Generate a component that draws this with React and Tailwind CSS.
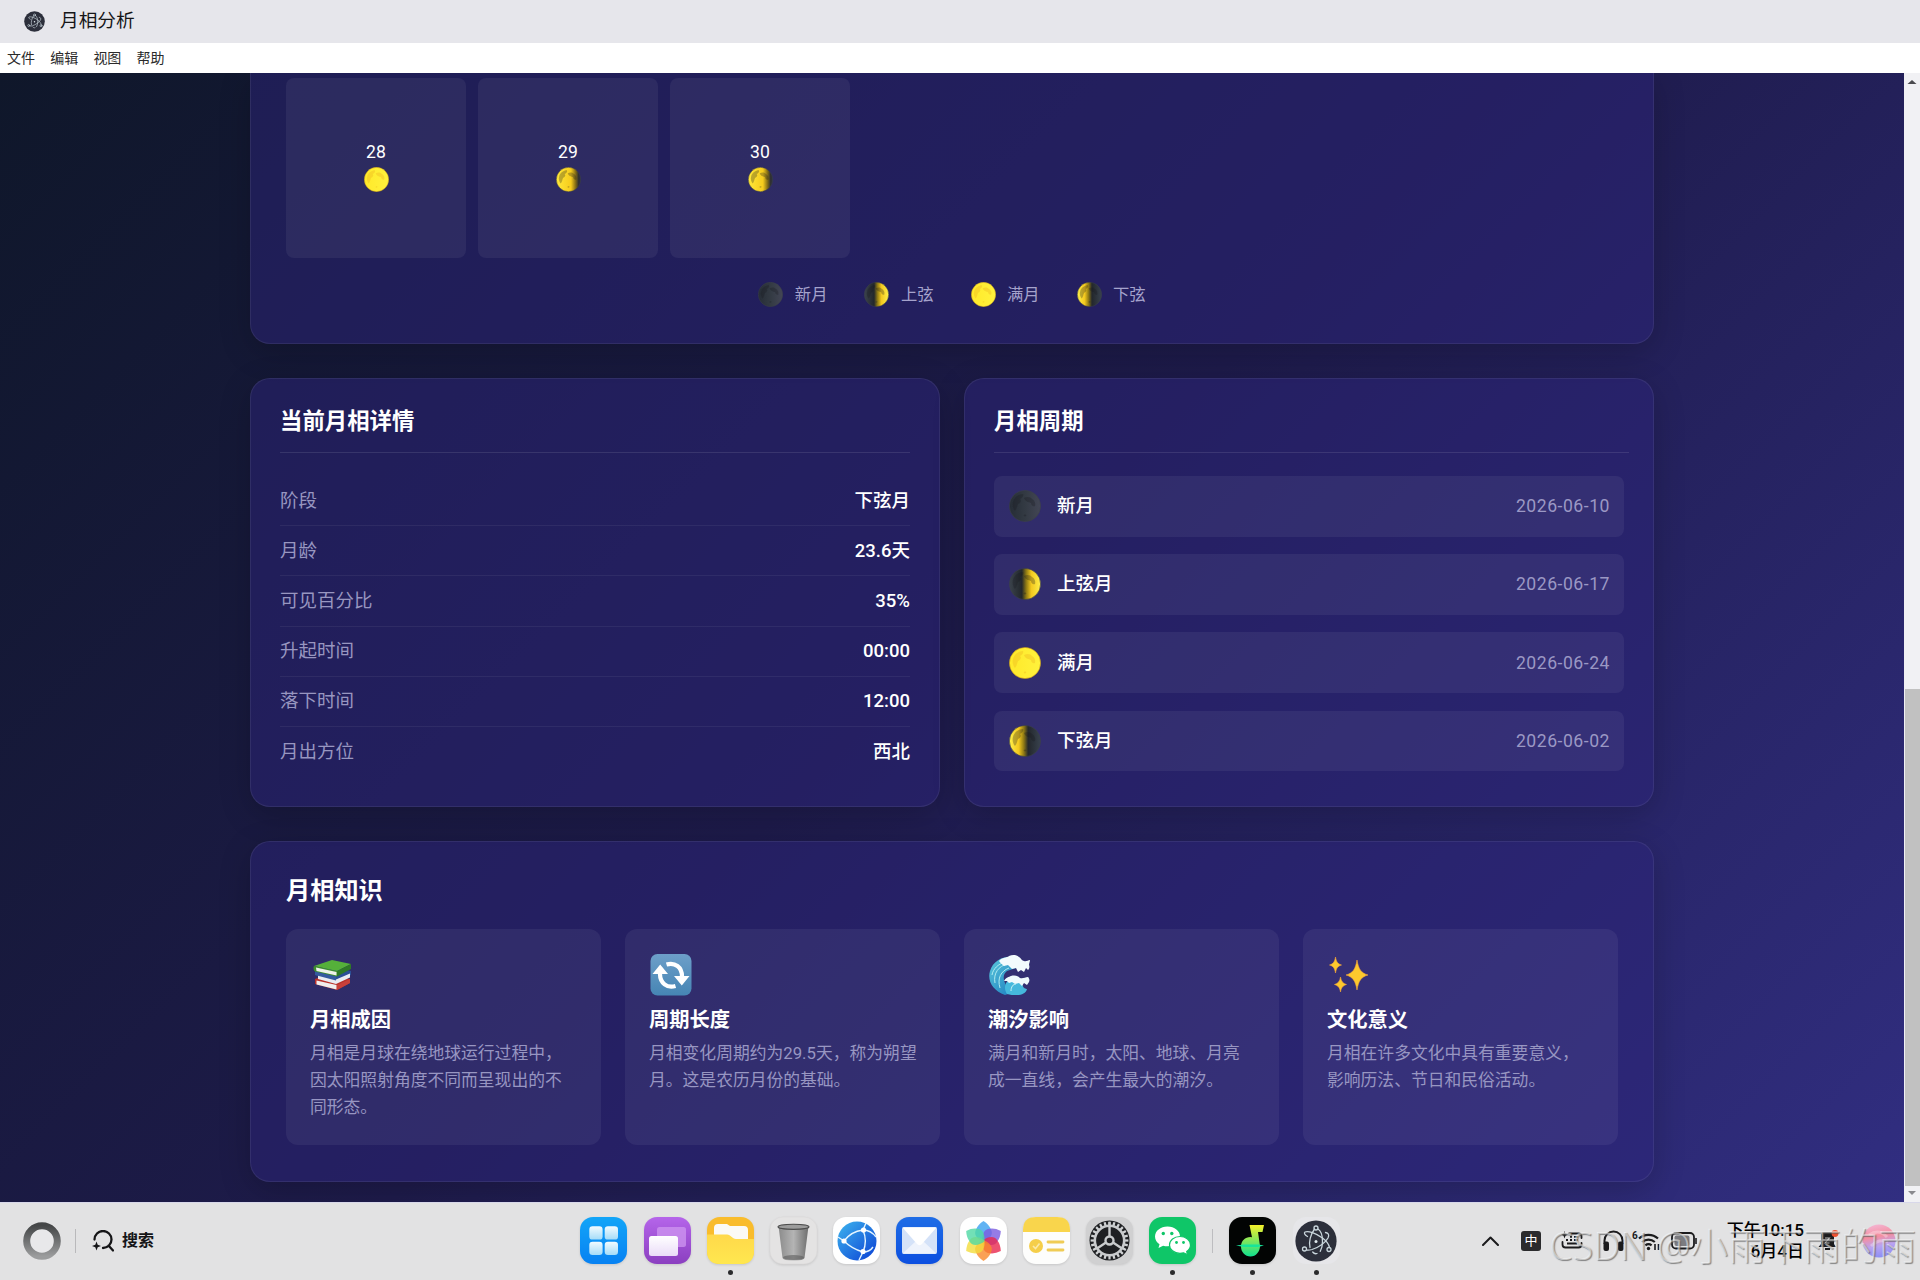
import React from "react";

const PHASES = {
  new: [["0", "#262d36"], ["0.5", "#333a43"], ["1", "#434655"]],
  first: [["0", "#3b434c"], ["0.4", "#22272b"], ["0.54", "#8f7a14"], ["0.7", "#f3c81e"], ["1", "#fff04a"]],
  full: [["0", "#ffe92a"], ["1", "#fff23c"]],
  gibbous: [["0", "#ffe83a"], ["0.6", "#f6cc1c"], ["0.8", "#7d6816"], ["0.92", "#2b2d33"], ["1", "#33373f"]],
  last: [["0", "#fff04a"], ["0.3", "#f3c81e"], ["0.46", "#8f7a14"], ["0.6", "#23272c"], ["1", "#38424e"]],
};

function Moon({ phase, className }) {
  const id = "moon-" + phase;
  const lit = phase === "full";
  const spot = lit ? "#e9a91d" : "#14171c";
  const opacity = lit ? 0.3 : 0.28;
  return (
    <svg viewBox="0 0 32 32" className={className}>
      <defs>
        <linearGradient id={id} x1="0" x2="1" y1="0" y2="0">
          {PHASES[phase].map(([o, c]) => (
            <stop key={o} offset={o} stopColor={c} />
          ))}
        </linearGradient>
        <filter id={id + "-soft"} x="-20%" y="-20%" width="140%" height="140%">
          <feGaussianBlur stdDeviation="0.7" />
        </filter>
      </defs>
      <circle cx="16" cy="16" r="15.6" fill={"url(#" + id + ")"} stroke={lit ? "#c99a18" : "#3b4048"} strokeWidth="0.6" />
      <g fill={spot} opacity={opacity} filter={"url(#" + id + "-soft)"}>
        <path d="M4 12c1-5 6-8 10-8 1 2-1 4-3 5 2 2 0 4-2 5-1 2-1 5-3 7-2-2-3-6-2-9z" />
        <path d="M15 8c3-2 7-1 8 1 2 1 4 4 3 7-2 1-4-1-4-3-2-1-6-1-7-5z" />
        <path d="M15 25c1-1 3 0 2 1s-3 0-2-1z" />
      </g>
    </svg>
  );
}

function ElectronMark({ className }) {
  return (
    <svg viewBox="0 0 42 42" className={className}>
      <circle cx="21" cy="21" r="20.6" fill="#2c2f3b" />
      <g fill="none" stroke="#c9d6dc" strokeWidth="1.3" strokeLinecap="round">
        <path d="M12.500 16.500C9.500 15 8.800 13 10 12c3-1.500 11 1 17.500 6 4 3 6.500 6.500 7 9.500" />
        <path d="M22 33.500c-1.500.5-3 .2-4.300-1.500M15 27.500c-1.500-5 .5-13 4.500-18.500" />
        <path d="M30.500 12.500c3 .5 4 2.500 2.500 5.500-3 5-10 9.500-16 11.500-2 .6-3.500.8-5 .6" />
        <path d="M23 9c2.500 1.500 4.500 6.500 4.500 12.500 0 4-.9 7.500-2.300 9.800" />
        <circle cx="21" cy="8" r="2" />
        <circle cx="9.500" cy="29" r="2" />
        <circle cx="34" cy="29.500" r="2" />
      </g>
      <circle cx="21" cy="21.500" r="1.500" fill="#dfe9ee" />
    </svg>
  );
}

const DAYS = [
  { day: 28, phase: "full" },
  { day: 29, phase: "gibbous" },
  { day: 30, phase: "gibbous" },
];

const LEGEND = [
  ["新月", "new"],
  ["上弦", "first"],
  ["满月", "full"],
  ["下弦", "last"],
];

const DETAILS = [
  ["阶段", "下弦月"],
  ["月龄", "23.6天"],
  ["可见百分比", "35%"],
  ["升起时间", "00:00"],
  ["落下时间", "12:00"],
  ["月出方位", "西北"],
];

const CYCLE = [
  ["新月", "2026-06-10", "new"],
  ["上弦月", "2026-06-17", "first"],
  ["满月", "2026-06-24", "full"],
  ["下弦月", "2026-06-02", "last"],
];

function Books() {
  return (
    <svg viewBox="0 0 44 44" className="size-11">
      <path d="M5 31l22 6 13-7v-4l-22-5-13 5z" fill="#b8312b" />
      <path d="M6.500 31.500l20 5V32l-20-4.500z" fill="#f0eeee" />
      <path d="M27 37l13-7v-4l-13 6z" fill="#c9403a" />
      <path d="M5 22l22 6 14-6v-4l-22-5-14 5z" fill="#2b4f96" />
      <path d="M8 21.500l18 5 14-6v4l-14 6.500-18-5z" fill="#e8ebf2" />
      <path d="M5 18l21 5v4.500L5 22z" fill="#34599f" />
      <path d="M4 13l18-6 19 4-14 7z" fill="#55b03a" />
      <path d="M4 13l23 5v5.500L5 18.500c-1.500-1-2-4-1-5.500z" fill="#3f8f2c" />
      <path d="M6 14.500l20.500 4.500v3.500L6.500 18z" fill="#eef1ea" />
      <path d="M27 18l14-7v5l-14 7.500z" fill="#2f7a25" />
    </svg>
  );
}

function Cycle() {
  return (
    <svg viewBox="0 0 44 44" className="size-11">
      <defs>
        <linearGradient id="cyc" x1="0" x2="0" y1="0" y2="1">
          <stop offset="0" stopColor="#6d9fc9" />
          <stop offset="1" stopColor="#4685b4" />
        </linearGradient>
      </defs>
      <rect x="1.500" y="1" width="41" height="41.500" rx="7" fill="url(#cyc)" />
      <g fill="none" stroke="#fff" strokeWidth="4.200">
        <path d="M17.500 11.500C26 9 33 14 33 23.500" />
        <path d="M26.500 33C18 35.500 11 30 11 21" />
      </g>
      <path d="M25 23h15.500l-7.700 9.500z M19 21H3.500l7.700-9.500z" fill="#fff" />
    </svg>
  );
}

function Wave() {
  return (
    <svg viewBox="0 0 44 44" className="size-11">
      <defs>
        <linearGradient id="wav" x1="0" x2="1" y1="0" y2="1">
          <stop offset="0" stopColor="#5cc9dc" />
          <stop offset="1" stopColor="#1576bd" />
        </linearGradient>
      </defs>
      <path d="M17 42C5 38-1 28 2 18 5 8 15 3 24 4l8 5-4 6-9 3c-4 3-4 8-2 12l3 11z" fill="url(#wav)" />
      <path d="M7 30c-2-10 4-17 12-19M12 35c-3-10 1-17 9-20M4 22c1-6 6-11 13-13" fill="none" stroke="#b0ecf0" strokeWidth="1" />
      <path d="M11 8c3-4 8-3 10-5 4-2 8-1 10 1 2 1 3 4 5 4 2 1 4-1 6-1 0 2-1 3-1 5 1 2 0 4-1 5l-2-2-2 4-3-2-3 2-2-4-4 1-4-4-4 1c-2-2-4-3-5-5z" fill="#f3fbfd" />
      <path d="M19 41c-4-6-2-14 5-15l8 1 3 6c0 2 3 3 4 3-1 4-5 6-10 6-4 0-7 0-10-1z" fill="#45b8dc" />
      <path d="M16 28c2-4 5-4 7-5 4-1 7 0 9 2 3 1 5-1 8-1 1 1 2 3 1 5l-2 3-3-2-2 3-3-3-4 1-3-2-3 1-2-2z" fill="#effafd" />
      <path d="M23 38c0-4 2-7 5-7" fill="none" stroke="#c4f1f5" strokeWidth="1" />
    </svg>
  );
}

function Sparkles() {
  return (
    <svg viewBox="0 0 44 44" className="size-11">
      <g fill="#fdc92d" stroke="#f5a53a" strokeWidth="0.6">
        <path d="M30 7c1.500 9 4 13 11 15-7 2-9.500 6-11 15-1.500-9-4-13-11-15 7-2 9.500-6 11-15z" />
        <path d="M8.500 4c.8 5 2.500 7 6 8-3.500 1-5.200 3-6 8-.8-5-2.500-7-6-8 3.500-1 5.200-3 6-8z" />
        <path d="M13.500 24c.7 4.500 2.500 6.500 6 7.500-3.500 1-5.300 3-6 7.500-.7-4.500-2.500-6.500-6-7.500 3.500-1 5.300-3 6-7.500z" />
      </g>
    </svg>
  );
}

const FACTS = [
  [Books, "月相成因", ["月相是月球在绕地球运行过程中，", "因太阳照射角度不同而呈现出的不", "同形态。"]],
  [Cycle, "周期长度", ["月相变化周期约为29.5天，称为朔望", "月。这是农历月份的基础。"]],
  [Wave, "潮汐影响", ["满月和新月时，太阳、地球、月亮", "成一直线，会产生最大的潮汐。"]],
  [Sparkles, "文化意义", ["月相在许多文化中具有重要意义，", "影响历法、节日和民俗活动。"]],
];

function AppIcon({ children, dot }) {
  return (
    <div className="relative size-[47px]">
      <svg viewBox="0 0 47 47" className="size-[47px] overflow-visible drop-shadow-[0_1px_1px_rgba(0,0,0,0.12)]">
        {children}
      </svg>
      {dot && <span className="absolute left-[21px] top-[53px] size-[5px] rounded-full bg-[#2a2a2c]" />}
    </div>
  );
}

function Grad({ id, from, to }) {
  return (
    <defs>
      <linearGradient id={id} x1="0" x2="0" y1="0" y2="1">
        <stop offset="0" stopColor={from} />
        <stop offset="1" stopColor={to} />
      </linearGradient>
    </defs>
  );
}

function Dock() {
  const teeth = Array.from({ length: 24 }, (_, i) => i * 15);
  const petals = [
    ["#3aa0f0", 0],
    ["#7a5be0", 60],
    ["#e8274e", 120],
    ["#f98a2c", 180],
    ["#f3dc3c", 240],
    ["#4fd8a4", 300],
  ];
  return (
    <div className="flex items-center gap-[16.2px]">
      <AppIcon>
        <Grad id="d1" from="#12a5f8" to="#0781f2" />
        <Grad id="d1b" from="#f2fbff" to="#a5dcf8" />
        <rect width="47" height="47" rx="13" fill="url(#d1)" />
        {[[9.3, 9.3], [24.7, 9.3], [9.3, 24.7], [24.7, 24.7]].map(([x, y]) => (
          <rect key={x + "-" + y} x={x} y={y} width="13.3" height="13.3" rx="3.2" fill="url(#d1b)" />
        ))}
      </AppIcon>
      <AppIcon>
        <Grad id="d2" from="#b565ea" to="#8b3fc0" />
        <Grad id="d2b" from="#ffffff" to="#eadcf8" />
        <rect width="47" height="47" rx="13" fill="url(#d2)" />
        <rect x="13" y="10" width="29" height="20" rx="2.5" fill="#cf97f0" opacity=".75" />
        <rect x="5" y="19" width="29" height="20" rx="2.5" fill="url(#d2b)" />
      </AppIcon>
      <AppIcon dot>
        <Grad id="d3" from="#ffd94a" to="#ffe74f" />
        <rect width="47" height="47" rx="13" fill="#f9bc2c" />
        <path d="M7 11q0-4 4-4h9l3 2h14q4 0 4 4v14H7z" fill="#fbfaf5" />
        <path d="M0 17.500h20c4 0 5 4.500 9 4.500h18v12q0 13-13 13H13Q0 47 0 34z" fill="url(#d3)" />
      </AppIcon>
      <AppIcon>
        <defs>
          <linearGradient id="d4" x1="0" x2="1" y1="0" y2="0">
            <stop offset="0" stopColor="#8b8b8b" />
            <stop offset=".5" stopColor="#b4b4b4" />
            <stop offset="1" stopColor="#6e6e6e" />
          </linearGradient>
        </defs>
        <rect width="47" height="47" rx="13" fill="#e4e3e3" stroke="#d8d7d7" strokeWidth=".5" />
        <path d="M8.500 9h30l-4 32q-.5 2.500-11 2.500t-11-2.500z" fill="url(#d4)" />
        <ellipse cx="23.500" cy="9.800" rx="15.500" ry="2.600" fill="#9c9c9c" stroke="#4d4d4d" strokeWidth="1.100" />
        <ellipse cx="23.500" cy="40.500" rx="10.500" ry="2.600" fill="#5d5d5d" opacity=".6" />
      </AppIcon>
      <AppIcon>
        <defs>
          <linearGradient id="d5" x1="0" x2="1" y1="0" y2="1">
            <stop offset="0" stopColor="#3db5ee" />
            <stop offset="1" stopColor="#0a3fd4" />
          </linearGradient>
        </defs>
        <rect width="47" height="47" rx="13" fill="#fff" />
        <circle cx="24" cy="24" r="19.500" fill="url(#d5)" />
        <g fill="none" stroke="#e4f5ff" strokeWidth="1.400">
          <path d="M11 24C16 17 22 14 30 13M11 24c6 6 12 9 19 11M30 13c3 7 3 15 0 22M30 13l3-7M30 13c6 0 10 3 13 7M30 35c5 0 8-2 10-5M30 35l-4 8M11 24l-6-4" />
        </g>
        <g fill="#fff">
          <circle cx="11" cy="24" r="2.600" />
          <circle cx="30.500" cy="13" r="2.600" />
          <circle cx="30" cy="34.500" r="2.600" />
        </g>
      </AppIcon>
      <AppIcon>
        <Grad id="d6" from="#1f6de6" to="#0c4fe0" />
        <rect width="47" height="47" rx="13" fill="url(#d6)" />
        <rect x="6" y="10" width="35" height="27" rx="2" fill="#d4e2f8" />
        <path d="M6.500 36.500L20 24h7l13.500 12.500z" fill="#eef3fc" />
        <path d="M6.500 10.500h34L26 27q-2.500 2.500-5 0z" fill="#fff" />
      </AppIcon>
      <AppIcon>
        <rect width="47" height="47" rx="13" fill="#fff" />
        {petals.map(([c, a]) => (
          <path key={a} d="M23.500 25c-7-3-10-8-7.500-12.500q2-5 7.500-8.500 5.500 3.500 7.500 8.500c2.500 4.500-.5 9.500-7.500 12.500z" fill={c} opacity=".8" transform={"rotate(" + a + " 23.500 24)"} />
        ))}
      </AppIcon>
      <AppIcon>
        <rect width="47" height="47" rx="13" fill="#fdfdfc" />
        <path d="M0 15v-2Q0 0 13 0h21q13 0 13 13v2z" fill="#f9d54c" />
        <circle cx="13" cy="29" r="7" fill="#f5ce4a" />
        <path d="M10 29l2.500 2.500 4-5" fill="none" stroke="#fbe9a8" strokeWidth="1.600" />
        <path d="M25 25h15M25 33h15" stroke="#f0cc55" strokeWidth="2.800" strokeLinecap="round" />
      </AppIcon>
      <AppIcon>
        <rect width="47" height="47" rx="13" fill="#d0d0d1" />
        <circle cx="23.500" cy="23.500" r="20" fill="#1f2023" />
        <g fill="#d0d2d4">
          {teeth.map((a) => (
            <rect key={a} x="22.400" y="4.600" width="2.200" height="4" transform={"rotate(" + a + " 23.500 23.500)"} />
          ))}
        </g>
        <circle cx="23.500" cy="23.500" r="14.700" fill="none" stroke="#c9cbcd" strokeWidth="2.600" />
        <circle cx="23.500" cy="23.500" r="4" fill="none" stroke="#c9cbcd" strokeWidth="2.400" />
        <path d="M23.500 19.500V5M20 25.500L11 31.500M27 25.500L36 31.500" stroke="#c9cbcd" strokeWidth="2.400" />
      </AppIcon>
      <AppIcon dot>
        <rect width="47" height="47" rx="13" fill="#0fc668" />
        <path d="M18.500 9.500C11.500 9.500 6 13.900 6 19.500c0 3.200 1.800 6 4.500 7.800L9.500 31l4.600-2.300c1.400.4 2.900.6 4.400.6 7 0 12.500-4.300 12.500-9.800s-5.500-10-12.500-10z" fill="#fff" />
        <path d="M31 19.500c-6 0-10.500 3.800-10.500 8.400s4.500 8.400 10.500 8.400c1.300 0 2.500-.2 3.700-.5l3.800 1.900-.8-3.200c2.300-1.600 3.800-3.900 3.800-6.600 0-4.600-4.500-8.400-10.500-8.400z" fill="#fff" stroke="#0fc668" strokeWidth="1.200" />
        <g fill="#0fc668">
          <circle cx="14.300" cy="16.500" r="1.700" />
          <circle cx="22.800" cy="16.500" r="1.700" />
          <circle cx="27.500" cy="25.500" r="1.400" />
          <circle cx="34.500" cy="25.500" r="1.400" />
        </g>
      </AppIcon>
      <div className="h-6 w-px bg-[#bdbdc0]" />
      <AppIcon dot>
        <Grad id="d11" from="#f4f02a" to="#0fe08e" />
        <rect width="47" height="47" rx="13" fill="#020403" />
        <path d="M20.500 8H35l-1.500 7H29l2 14c0 5.500-4 10.500-9.500 10.500S12 35 12 29.500 16 20 21.500 20l1.500.2z" fill="url(#d11)" />
        <path d="M7 28.500l8-1h14l6 1-6 1.500H15z" fill="#17e59a" />
      </AppIcon>
      <div className="relative size-[47px]">
        <div className="flex size-[47px] items-center justify-center rounded-[13px] bg-[#e6e6e9]">
          <ElectronMark className="size-[42px]" />
        </div>
        <span className="absolute left-[21px] top-[53px] size-[5px] rounded-full bg-[#2a2a2c]" />
      </div>
    </div>
  );
}

function Tray() {
  return (
    <div className="flex items-center justify-end pr-6 text-[#1b1b1d]">
      <svg viewBox="0 0 17 10" className="h-2.5 w-[17px]" fill="none" stroke="currentColor" strokeWidth="2">
        <path d="M1 9l7.500-7.500L16 9" strokeLinecap="round" strokeLinejoin="round" />
      </svg>
      <div className="ml-[22px] flex size-5 items-center justify-center rounded-[3px] bg-[#2b2b2d] text-[13px] leading-none text-white">中</div>
      <svg viewBox="0 0 22 20" className="ml-5 h-5 w-[22px]" fill="none" stroke="currentColor" strokeWidth="1.800">
        <path d="M8 2.500h9.500q3 0 3 3V7M1.500 11v2.500q0 3 3 3h13q3 0 3-3V12" strokeLinecap="round" />
        <path d="M6 12.500h10M5 9h2M9 9h2M13 9h4M9 5.800h2M13 5.800h4" />
        <path d="M3.500 0l1 2.800 2.800 1-2.800 1-1 2.800-1-2.800L0 3.800l2.500-1z" fill="currentColor" stroke="none" />
      </svg>
      <svg viewBox="0 0 21 22" className="ml-5 h-[22px] w-[21px]">
        <path d="M1.500 14v-3.500a9 9 0 0 1 18 0V14" fill="none" stroke="currentColor" strokeWidth="2" />
        <rect x=".5" y="11.500" width="5.500" height="9.500" rx="2" fill="currentColor" />
        <rect x="15" y="11.500" width="5.500" height="9.500" rx="2" fill="currentColor" />
      </svg>
      <div className="ml-2 flex w-7 items-start">
        <span className="text-[10px] font-bold leading-none">6</span>
        <svg viewBox="0 0 22 20" className="h-5 w-[22px]" fill="none" stroke="currentColor" strokeWidth="2.200">
          <path d="M1 7.500a14 14 0 0 1 19 0M4.200 11a9.500 9.500 0 0 1 12.600 0M7.400 14.300a5 5 0 0 1 6.200 0" />
          <circle cx="10.500" cy="17.500" r="1.700" fill="currentColor" stroke="none" />
          <path d="M17 13v6M20.500 19v-6" strokeWidth="1.600" />
        </svg>
      </div>
      <svg viewBox="0 0 26 18" className="ml-[11px] h-[18px] w-[26px]">
        <rect x="1" y="1" width="22" height="15.500" rx="4" fill="none" stroke="currentColor" strokeWidth="1.800" />
        <rect x="3.500" y="3.500" width="15" height="10.500" rx="2" fill="#7c7c80" />
        <path d="M25 6v6" stroke="currentColor" strokeWidth="1.600" />
      </svg>
      <div className="ml-[33px] w-[74px] whitespace-nowrap text-right text-[17px] font-medium leading-[20.500px] text-black">
        <div className="-ml-2">下午10:15</div>
        <div>6月4日</div>
      </div>
      <svg viewBox="0 0 22 22" className="ml-[13px] size-[22px]">
        <path d="M4 5q0-3 3-3h7q3 0 3 3v9l2 3H1.500L4 14z" fill="currentColor" />
        <path d="M8 19h5" stroke="currentColor" strokeWidth="2" />
        <path d="M8 8h4.500L8 13h4.500" fill="none" stroke="#bbb" strokeWidth="1.100" />
        <circle cx="18" cy="3.500" r="3.400" fill="#ee5130" />
      </svg>
      <svg viewBox="0 0 34 34" className="ml-[23px] size-[34px]">
        <defs>
          <linearGradient id="orb" x1=".4" x2=".6" y1="0" y2="1">
            <stop offset="0" stopColor="#f3b3d0" />
            <stop offset=".35" stopColor="#f58fa0" />
            <stop offset=".65" stopColor="#b9a3f2" />
            <stop offset="1" stopColor="#8a8df5" />
          </linearGradient>
        </defs>
        <circle cx="17" cy="17" r="16.500" fill="url(#orb)" />
        <path d="M7 11q10-7 18 2M9 22q8-8 17-4" stroke="#fff" strokeWidth="3" fill="none" opacity=".3" />
      </svg>
    </div>
  );
}

const CARD =
  "border border-white/[0.07] bg-[rgba(44,36,122,0.5)] shadow-[0_8px_32px_rgba(0,0,0,0.2)]";

export default function App() {
  return (
    <div className="relative flex h-[1280px] w-[1920px] flex-col overflow-hidden bg-white font-['Roboto','Noto_Sans_CJK_SC',sans-serif]">
      <header className="flex h-[43px] shrink-0 items-center bg-[#e6e6eb] pl-6">
        <ElectronMark className="size-[21px]" />
        <span className="ml-[15px] text-[18.700px] leading-none text-[#161618]">月相分析</span>
      </header>
      <nav className="flex h-[30px] shrink-0 items-center gap-[15.200px] bg-white pl-[7px] text-[14px] leading-none text-[#2a2a2a]">
        <span>文件</span>
        <span>编辑</span>
        <span>视图</span>
        <span>帮助</span>
      </nav>

      <div className="flex h-[1129px] shrink-0">
        <main className="flex flex-1 flex-col items-center overflow-hidden bg-[linear-gradient(135deg,#0f172a_0%,#1e1b4b_50%,#312e81_100%)]">
          <section className="h-[271px] w-[1404px] shrink-0 rounded-b-[20px] border border-t-0 border-white/[0.07] bg-[rgba(44,36,122,0.5)] px-[35px] pt-[5px] shadow-[0_8px_32px_rgba(0,0,0,0.2)]">
            <div className="grid grid-cols-7 gap-3">
              {DAYS.map(({ day, phase }) => (
                <div key={day} className="flex h-[180px] flex-col items-center rounded-[8px] bg-white/[0.06] pt-[62px]">
                  <span className="text-[17.600px] leading-6 text-white">{day}</span>
                  <Moon phase={phase} className="mt-[3px] size-[25px]" />
                </div>
              ))}
            </div>
            <div className="mt-6 flex justify-center gap-[37px] text-[16.300px] leading-[25px] text-[#a5a3cc]">
              {LEGEND.map(([label, phase]) => (
                <div key={label} className="flex items-center gap-[11.500px]">
                  <Moon phase={phase} className="size-[25px]" />
                  <span>{label}</span>
                </div>
              ))}
            </div>
          </section>

          <div className="mt-[34px] flex h-[429px] w-[1404px] shrink-0 gap-6">
            <section className={"w-[690px] rounded-[20px] px-[30px] " + CARD}>
              <h2 className="mx-[-1px] mt-[27px] h-[47px] border-b border-white/10 text-[22.400px] font-bold leading-[30px] text-white">当前月相详情</h2>
              <div className="mx-[-1px] mt-[23px] text-[18.500px]">
                {DETAILS.map(([label, value]) => (
                  <div key={label} className="flex h-[50.200px] items-center justify-between border-b border-white/[0.06] leading-7 last:border-b-0">
                    <span className="text-[#9896c0]">{label}</span>
                    <span className="font-medium text-white">{value}</span>
                  </div>
                ))}
              </div>
            </section>
            <section className={"w-[690px] rounded-[20px] px-[29px] " + CARD}>
              <h2 className="mr-[-5px] mt-[27px] h-[47px] border-b border-white/10 text-[22.400px] font-bold leading-[30px] text-white">月相周期</h2>
              <div className="mt-[23px] flex flex-col gap-[17.600px]">
                {CYCLE.map(([label, date, phase]) => (
                  <div key={label} className="flex h-[60.600px] items-center rounded-[8px] bg-white/[0.06] pl-[15px] pr-[14px]">
                    <Moon phase={phase} className="size-8" />
                    <span className="ml-4 text-[18.500px] font-medium leading-7 text-white">{label}</span>
                    <span className="ml-auto text-[17.600px] leading-7 tracking-[0.03em] text-[#9b98c4]">{date}</span>
                  </div>
                ))}
              </div>
            </section>
          </div>

          <section className={"mt-[34px] h-[341px] w-[1404px] shrink-0 rounded-[20px] px-[35px] " + CARD}>
            <h2 className="mt-[31px] text-[24.200px] font-bold leading-9 text-white">月相知识</h2>
            <div className="mt-5 grid grid-cols-4 gap-6">
              {FACTS.map(([Icon, title, lines]) => (
                <article key={title} className="h-[216px] rounded-[12px] bg-white/[0.06] px-6 pt-6">
                  <Icon />
                  <h3 className="mt-[9px] text-[20.300px] font-bold leading-7 text-white">{title}</h3>
                  <p className="mt-[6px] whitespace-nowrap text-[16.800px] leading-[27.100px] text-[#9896c2]">
                    {lines.map((line) => (
                      <span key={line} className="block">{line}</span>
                    ))}
                  </p>
                </article>
              ))}
            </div>
          </section>
        </main>

        <aside className="flex w-4 flex-col items-center bg-[#f1f1f4]">
          <svg viewBox="0 0 16 16" className="size-4"><path d="M3.500 11L8 7l4.500 4z" fill="#4a4a4e" /></svg>
          <div className="mt-[600px] h-[497px] w-[15px] self-end bg-[#c1c1c1]" />
          <svg viewBox="0 0 16 14" className="h-3.5 w-4"><path d="M4 5l4 4 4-4z" fill="#8a8a8e" /></svg>
        </aside>
      </div>

      <footer className="grid h-[78px] shrink-0 grid-cols-[1fr_auto_1fr] items-center border-t border-[#d8d8ea] bg-[#e2e2e3] pb-0.5">
        <div className="flex items-center pl-[23px]">
          <svg viewBox="0 0 38 38" className="size-[38px]">
            <Grad id="ring" from="#454748" to="#9b9c9d" />
            <circle cx="19" cy="19" r="15.300" fill="#e8e8ea" stroke="url(#ring)" strokeWidth="7" />
          </svg>
          <div className="ml-[14px] h-6 w-px bg-[#b9b9bb]" />
          <svg viewBox="0 0 22 22" className="ml-4 size-[22px]" fill="none" stroke="#151517" strokeWidth="2.300">
            <path d="M2.500 9.500A8.500 8.500 0 1 1 11 18M16.500 15.500L21 20.500" strokeLinecap="round" />
            <path d="M4.500 11.500l1.200 3.300L9 16l-3.300 1.200-1.200 3.300-1.200-3.300L0 16l3.300-1.200z" fill="#151517" stroke="none" />
          </svg>
          <span className="ml-2 text-[16px] font-bold leading-none text-[#151517]">搜索</span>
        </div>
        <Dock />
        <Tray />
      </footer>

      <div className="absolute bottom-[11px] right-[4px] whitespace-nowrap font-['Noto_Sans','Noto_Sans_CJK_SC',sans-serif] text-[37.600px] font-light leading-[46px] text-white/50 [text-shadow:1px_1px_1px_rgba(90,90,90,0.7)]">
        CSDN @小雨下雨的雨
      </div>
    </div>
  );
}
